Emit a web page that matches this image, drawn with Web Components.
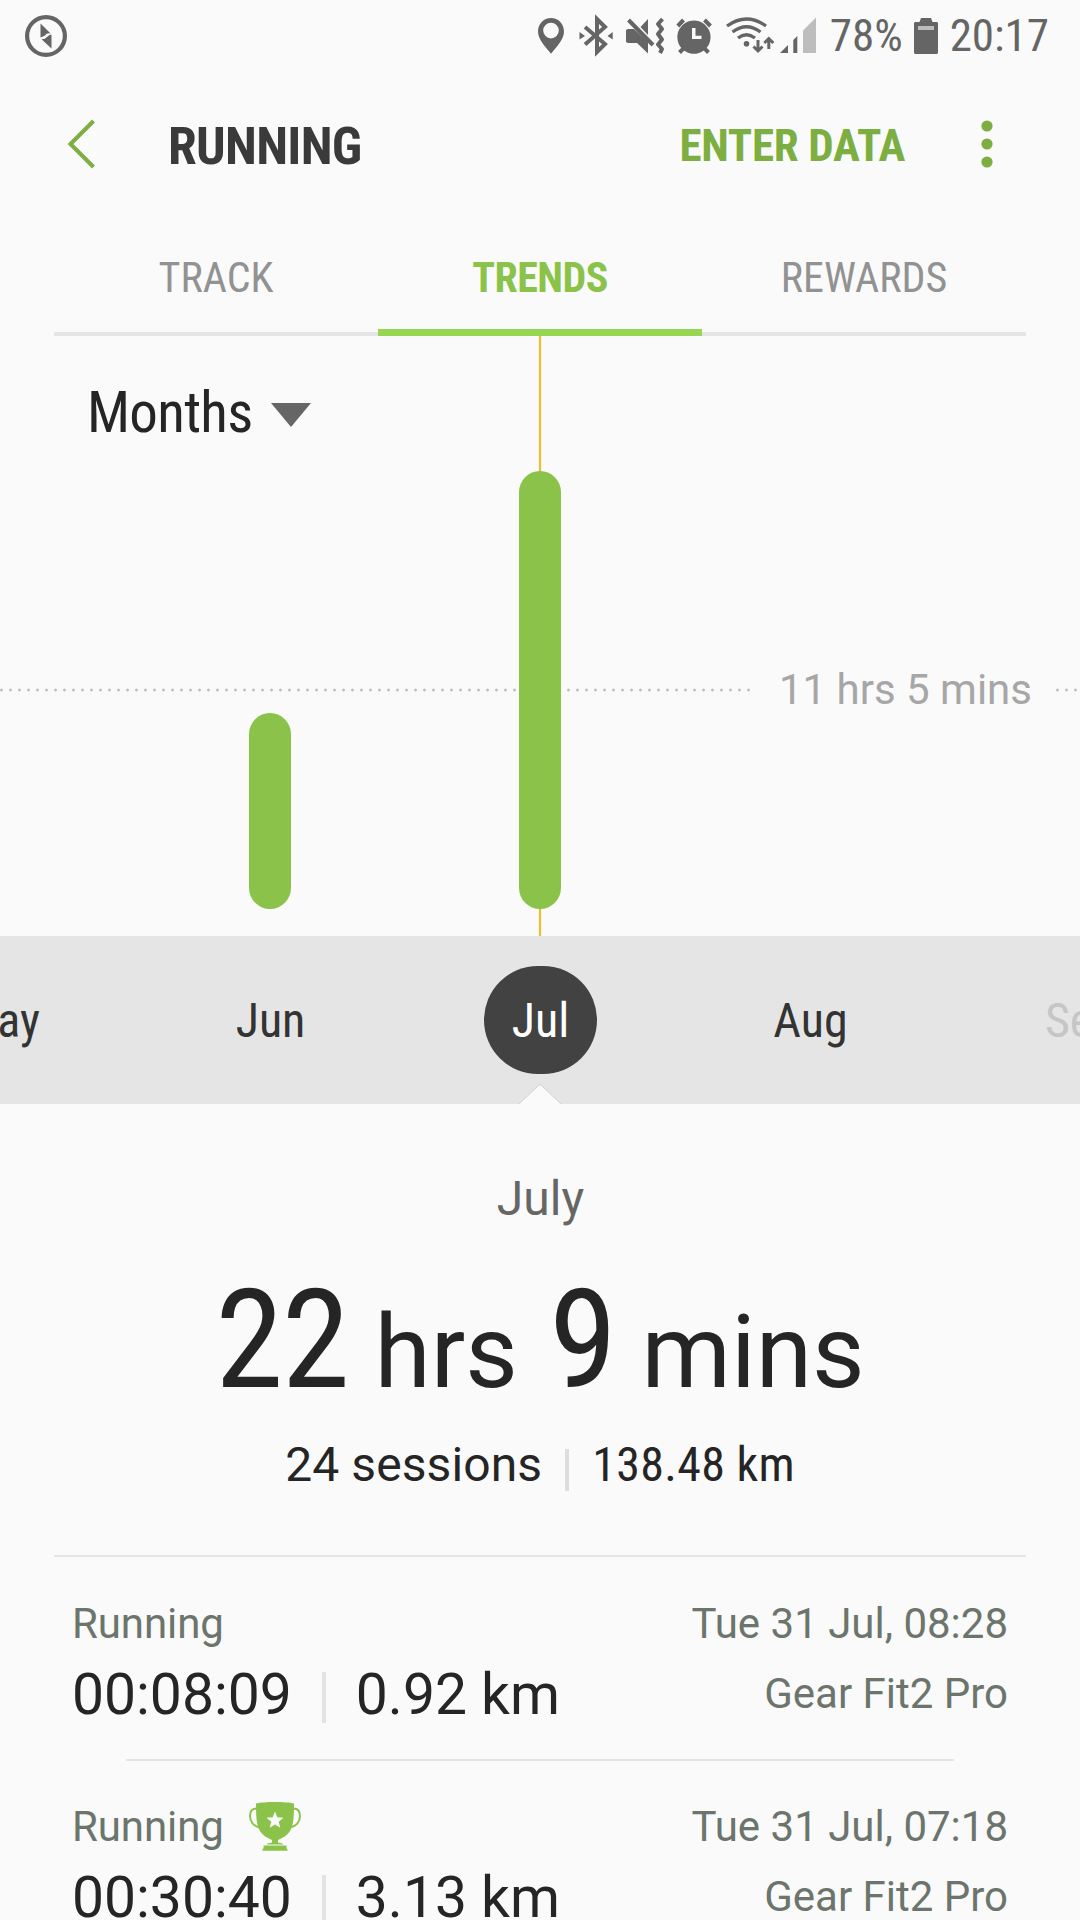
<!DOCTYPE html>
<html lang="en">
<head>
<meta charset="utf-8">
<title>Running</title>
<style>
  body {
    --bg: #fafafa;
    --text: #252525;
    --green: #8bc34a;
    --green-dark: #7cae41;
    --line: #e5e5e5;
    --muted: #6b756c;
    --cond: "Roboto Condensed", Roboto, sans-serif;
    margin: 0;
    width: 1080px;
    height: 1920px;
    overflow: hidden;
    background: var(--bg);
    color: var(--text);
    font-family: Roboto, sans-serif;
  }
</style>
</head>
<body>
<health-app></health-app>

<script>
const define = (name, html) => {
  const template = document.createElement("template");
  template.innerHTML = html;

  customElements.define(name, class extends HTMLElement {
    constructor() {
      super();
      this.attachShadow({ mode: "open" });
      this.shadowRoot.appendChild(template.content.cloneNode(true));
    }
  });
};

define("status-bar", `
  <style>
    :host {
      display: flex;
      align-items: center;
      height: 72px;
      box-sizing: border-box;
      padding: 0 31px 0 25px;
      color: #656565;
      font: 400 45px/76px var(--cond);
      font-stretch: 75%;
    }
    svg { display: block; flex: none; fill: currentColor; }
    .space { flex: 1; }
    .level { margin-left: 10px; }
    .battery { margin: 0 12px 0 11px; }
  </style>
  <svg width="42" height="42" viewBox="0 0 42 42">
    <circle cx="21" cy="21" r="18.9" fill="none" stroke="currentColor" stroke-width="4.2"/>
    <path d="M15.5 8.6L25.6 18.6Q22 17.4 20 20.4Q18 21.4 15.5 22.4ZM26.5 19.6V33.6L16.5 24.2Q20 24.4 22 22Q24 20 26.5 19.6Z"/>
  </svg>
  <div class="space"></div>
  <svg width="284" height="72" viewBox="536 0 284 72">
    <!-- location -->
    <path fill-rule="evenodd" d="M551 18C543.500 18 538 24 538 31.500C538 39 544.500 46 551 53.700C557.500 46 564 39 564 31.500C564 24 558.500 18 551 18ZM551 22.800A7.800 7.800 0 1 1 551 38.400A7.800 7.800 0 1 1 551 22.800Z"/>
    <!-- bluetooth -->
    <path d="M585 27L605 44L597 52V19L605 27L585 44.500" fill="none" stroke="currentColor" stroke-width="4"/>
    <path d="M579.500 32L585 36L579.500 39.500ZM612.700 32L607.500 36L612.700 39.500Z"/>
    <!-- mute / vibrate -->
    <path d="M626 30L628 29H634L648 42V53.500L637 43H628L626 42ZM640.500 27L648 19V35Z"/>
    <path d="M628.500 20L653 45" fill="none" stroke="currentColor" stroke-width="4"/>
    <path d="M662.500 19L658 24L662 29L658 34L662 39.500L658 44.500L662 49L660 53" fill="none" stroke="currentColor" stroke-width="4" stroke-linejoin="round"/>
    <!-- alarm -->
    <path fill-rule="evenodd" d="M694 20.500A16.600 16.600 0 1 1 693.900 20.500ZM692 28V39H701.500V35.700H695.500V28Z"/>
    <path d="M677.800 26L683.500 20M704.500 20L710.500 26M684 48L679.500 52.500M704 48L708.500 52.500" fill="none" stroke="currentColor" stroke-width="4"/>
    <!-- wifi -->
    <path d="M727 26Q746.500 12 766 26M732.500 32Q746.500 21.500 760.500 32M738 38Q746.500 31.500 755 38" fill="none" stroke="currentColor" stroke-width="3.300"/>
    <circle cx="746.500" cy="43.700" r="2.800"/>
    <path d="M758 40V50M753.500 46.500L758 51L762.500 46.500M768.800 49V39M764.300 43L768.800 38.500L773.300 43" fill="none" stroke="currentColor" stroke-width="3"/>
    <!-- signal -->
    <path d="M780 53L788 45V53ZM793.300 40L797.300 36V53H793.300Z"/>
    <path d="M803 30.500L816 17.500V53H803Z" fill="#bdbdbd"/>
  </svg>
  <span class="level">78%</span>
  <svg class="battery" width="24" height="36" viewBox="0 0 24 36">
    <path d="M7 0H17L18.500 4H23L24 5V35L23 36H1L0 35V5L1 4H5.500Z"/>
    <path d="M4 8H20V12H4Z" fill="#bdbdbd"/>
  </svg>
  <span>20:17</span>
`);

define("app-bar", `
  <style>
    :host {
      display: flex;
      align-items: center;
      height: 144px;
      box-sizing: border-box;
      padding: 0 87px 0 67px;
      font-family: var(--cond);
      font-stretch: 75%;
      font-weight: 700;
      color: var(--green-dark);
    }
    svg { display: block; flex: none; }
    .title { margin: 5px 0 0 72px; flex: 1; font-size: 52px; line-height: 60px; letter-spacing: -.7px; color: #3a3a3a; }
    .action { font-size: 45px; line-height: 60px; letter-spacing: -.3px; margin: 3px 76px 0 0; }
  </style>
  <svg width="29" height="50" viewBox="0 0 29 50">
    <path d="M26.500 2L3.500 25L26.500 48" fill="none" stroke="currentColor" stroke-width="4"/>
  </svg>
  <div class="title"><slot></slot></div>
  <div class="action"><slot name="action"></slot></div>
  <svg width="12" height="48" viewBox="0 0 12 48" fill="currentColor">
    <circle cx="6" cy="6" r="5.600"/><circle cx="6" cy="24" r="5.600"/><circle cx="6" cy="42" r="5.600"/>
  </svg>
`);

define("tab-strip", `
  <style>
    :host {
      display: flex;
      height: 120px;
      margin: 0 54px;
      background: linear-gradient(#e5e5e5, #e5e5e5) bottom / 100% 4px no-repeat;
    }
  </style>
  <slot></slot>
`);

define("tab-item", `
  <style>
    :host {
      display: block;
      flex: 1;
      height: 120px;
      box-sizing: border-box;
      text-align: center;
      font: 400 42px/123px var(--cond);
      font-stretch: 75%;
      color: #929292;
    }
    :host([active]) {
      font-weight: 700;
      letter-spacing: -.5px;
      color: var(--green);
      border-bottom: 7px solid #96d652;
    }
  </style>
  <slot></slot>
`);

define("trend-chart", `
  <style>
    :host { display: block; position: relative; height: 600px; overflow: hidden; }
    .lines { position: absolute; inset: 0; }
    .picker {
      position: absolute;
      left: 87px;
      top: 44px;
      display: flex;
      align-items: center;
      gap: 19px;
      font: 400 57px/66px var(--cond);
      font-stretch: 75%;
      letter-spacing: -.7px;
    }
    .picker svg { margin-top: 3px; }
    .average {
      position: absolute;
      right: 48px;
      top: 329px;
      font-size: 42px;
      line-height: 50px;
      color: #a6a6a6;
    }
    .bars {
      position: relative;
      display: grid;
      grid-template-columns: repeat(5, 270px);
      margin-left: -135px;
      height: 573px;
      align-items: end;
      justify-items: center;
    }
  </style>
  <svg class="lines" width="1080" height="600" viewBox="0 0 1080 600">
    <path d="M540 0V600" stroke="#fff0b8" stroke-width="4"/>
    <path d="M540 0V600" stroke="#dcc05c" stroke-width="2"/>
    <path d="M1.500 354H752M1057.500 354H1080" stroke="#c0c0c0" stroke-width="3" stroke-linecap="round" stroke-dasharray="0 9"/>
  </svg>
  <div class="picker">
    <span>Months</span>
    <svg width="40" height="24" viewBox="0 0 40 24"><path d="M0 0H40L20 24Z" fill="#666"/></svg>
  </div>
  <div class="average">11 hrs 5 mins</div>
  <div class="bars"><slot></slot></div>
`);

define("month-scale", `
  <style>
    :host {
      position: relative;
      display: grid;
      grid-template-columns: repeat(5, 270px);
      align-items: center;
      justify-items: center;
      margin-left: -135px;
      width: 1350px;
      height: 168px;
      background: var(--line);
    }
    svg { position: absolute; left: 653px; bottom: 0; }
  </style>
  <slot></slot>
  <svg width="44" height="20" viewBox="0 0 44 20">
    <path d="M1 20L20.500 1.500Q22 .5 23.500 1.500L43 20" fill="#fafafa" stroke="#d2d2d2"/>
  </svg>
`);

define("month-item", `
  <style>
    :host {
      display: block;
      width: 113px;
      height: 108px;
      font: 400 48px/109px var(--cond);
      font-stretch: 75%;
      text-align: center;
      text-indent: 1px;
      color: #333;
    }
    :host([selected]) { background: #424242; border-radius: 54px; color: #fff; }
    :host([disabled]) { color: #c6c6c6; }
  </style>
  <slot></slot>
`);

define("month-summary", `
  <style>
    :host {
      display: flex;
      flex-direction: column;
      align-items: center;
      height: 451px;
      margin: 0 54px 1px;
      border-bottom: 2px solid var(--line);
    }
    .month { margin-top: 67px; font-size: 48px; line-height: 56px; text-indent: 1px; color: #666; }
    .total { display: flex; align-items: baseline; margin-top: 32px; font-size: 102px; line-height: 162px; white-space: pre; }
    .total b { font: 400 138px/162px var(--cond); font-stretch: 75%; letter-spacing: -1.5px; }
    .total b + span { margin-left: 26px; }
    .total span + b { margin-left: 31px; }
    .facts { display: flex; align-items: center; margin-top: 4px; font-size: 48px; line-height: 56px; letter-spacing: .1px; }
    .facts i { width: 4px; height: 42px; margin: 10px 23px 0; background: #ddd; }
    .facts .km { font-family: var(--cond); font-stretch: 75%; letter-spacing: .3px; }
  </style>
  <div class="month">July</div>
  <div class="total"><b>22</b><span>hrs</span><b>9</b><span>mins</span></div>
  <div class="facts"><span>24 sessions</span><i></i><span class="km">138.48 km</span></div>
`);

define("session-row", `
  <style>
    :host {
      display: flex;
      justify-content: space-between;
      height: 201px;
      box-sizing: border-box;
      padding: 41px 72px 0;
      font-size: 42px;
      line-height: 50px;
      color: var(--muted);
      white-space: nowrap;
    }
    .name { display: flex; height: 50px; letter-spacing: -.1px; }
    .values { display: flex; margin-top: 13px; font-size: 57px; line-height: 66px; color: var(--text); }
    .values i { width: 4px; height: 51px; margin: 10px 30px 0 30px; background: #e3e3e3; }
    .side { text-align: right; }
    .side div + div { margin-top: 20px; }
  </style>
  <div>
    <div class="name"><slot></slot><slot name="badge"></slot></div>
    <div class="values"><slot name="time"></slot><i></i><slot name="distance"></slot></div>
  </div>
  <div class="side">
    <div><slot name="date"></slot></div>
    <div><slot name="device"></slot></div>
  </div>
`);

define("row-divider", `
  <style>:host { display: block; height: 2px; margin: 0 126px; background: var(--line); }</style>
`);

define("trophy-icon", `
  <style>
    :host { display: block; margin-left: 25px; }
    svg { display: block; }
  </style>
  <svg width="52" height="49" viewBox="0 0 52 49">
    <path d="M7.500 6.500C3 6.500 1 9.500 1 14C1 20 5 24.500 11 25.500M44.500 6.500C49 6.500 51 9.500 51 14C51 20 47 24.500 41 25.500" fill="none" stroke="#8bc34a" stroke-width="2"/>
    <path d="M7 1.500C15 -.5 37 -.5 45 1.500C45 15 44.500 23 41 29C38 34 33 36 29 38V40.500C32 41 34 41.500 34.500 42.500H17.500C18 41.500 20 41 23 40.500V38C19 36 14 34 11 29C7.500 23 7 15 7 1.500ZM14.500 43.500H37.500V46.500L38.500 47V48.700H13.500V47L14.500 46.500Z" fill="#8bc34a"/>
    <path d="M26 9.500L28.300 15.300L34.500 15.700L29.700 19.700L31.300 25.800L26 22.400L20.700 25.800L22.300 19.700L17.500 15.700L23.700 15.300Z" fill="#fafafa"/>
  </svg>
`);

// Bar height comes from the "value" attribute, in pixels of the plot
class TrendBar extends HTMLElement {
  constructor() {
    super();
    this.attachShadow({ mode: "open" });
    this.shadowRoot.innerHTML = `
      <style>
        :host { display: block; }
        div { width: 42px; border-radius: 21px; background: var(--green); }
      </style>
      <div></div>
    `;
  }

  connectedCallback() {
    this.shadowRoot.querySelector("div").style.height = `${this.getAttribute("value")}px`;
  }
}

customElements.define("trend-bar", TrendBar);

define("health-app", `
  <style>:host { display: block; width: 1080px; height: 1920px; overflow: hidden; }</style>
  <status-bar></status-bar>
  <app-bar>RUNNING<span slot="action">ENTER DATA</span></app-bar>
  <tab-strip>
    <tab-item>TRACK</tab-item>
    <tab-item active>TRENDS</tab-item>
    <tab-item>REWARDS</tab-item>
  </tab-strip>
  <trend-chart>
    <trend-bar value="0"></trend-bar>
    <trend-bar value="196"></trend-bar>
    <trend-bar value="438"></trend-bar>
  </trend-chart>
  <month-scale>
    <month-item>May</month-item>
    <month-item>Jun</month-item>
    <month-item selected>Jul</month-item>
    <month-item>Aug</month-item>
    <month-item disabled>Sep</month-item>
  </month-scale>
  <month-summary></month-summary>
  <session-row>
    Running
    <span slot="time">00:08:09</span>
    <span slot="distance">0.92 km</span>
    <span slot="date">Tue 31 Jul, 08:28</span>
    <span slot="device">Gear Fit2 Pro</span>
  </session-row>
  <row-divider></row-divider>
  <session-row>
    Running
    <trophy-icon slot="badge"></trophy-icon>
    <span slot="time">00:30:40</span>
    <span slot="distance">3.13 km</span>
    <span slot="date">Tue 31 Jul, 07:18</span>
    <span slot="device">Gear Fit2 Pro</span>
  </session-row>
`);
</script>
</body>
</html>
